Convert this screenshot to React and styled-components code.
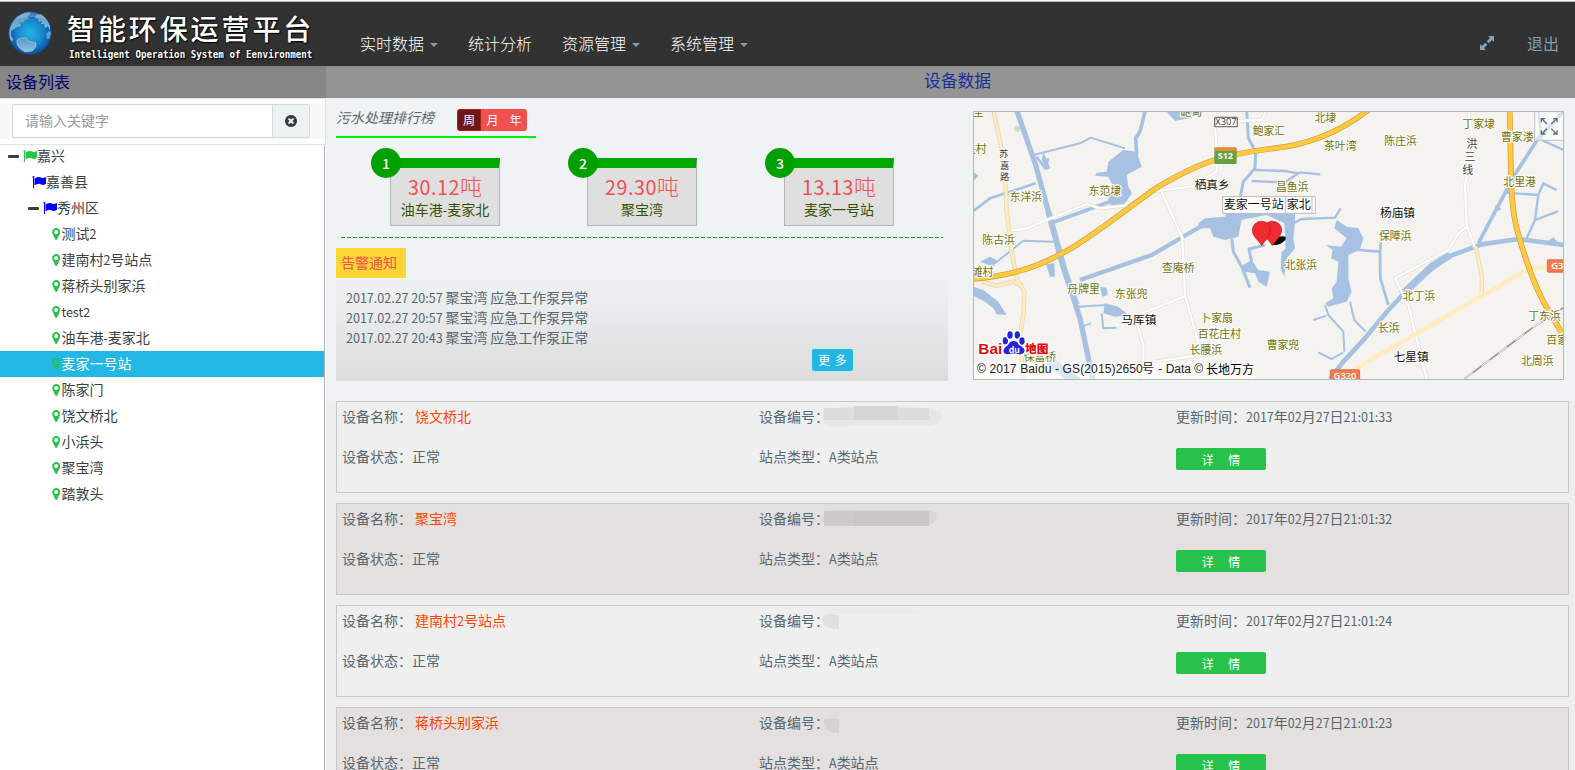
import React from 'react';
import styled, { createGlobalStyle } from 'styled-components';

const Global = createGlobalStyle`
  * { box-sizing: border-box; }
  body {
    margin: 0;
    background: #eff3f4;
    color: #58666e;
    font-family: "Noto Sans CJK SC", sans-serif;
    font-size: 14px;
    font-weight: 400;
    line-height: 20px;
  }
`;

const Latin = styled.span`
  font-size: 0.895em;
  font-weight: 400;
`;

/* Latin runs are set a little smaller than the Chinese text around them. */
const mix = (text) =>
  text.split(/([A-Za-z0-9.:\- ]+)/).map((part, i) =>
    i % 2 ? <Latin key={i}>{part}</Latin> : part
  );

const Page = styled.div`
  width: 100%;
  height: 770px;
  overflow: hidden;
  display: flex;
  flex-direction: column;
`;

const Header = styled.header`
  flex: none;
  height: 66px;
  border-top: 1px solid #f1f4f4;
  background: #323232;
  box-shadow: inset 0 1px 0 #b9bfbf;
  display: flex;
`;

const Brand = styled.div`
  width: 360px;
  padding: 10px 0 0 8px;
  display: flex;
  gap: 15px;
`;

const BrandText = styled.div`
  color: #fff;
  white-space: nowrap;
  text-shadow: 0 0 2px #000, 1px 1px 1px #000;
`;

const BrandName = styled.div`
  height: 36px;
  font-size: 28px;
  font-weight: 500;
  line-height: 35px;
  letter-spacing: 2.9px;
`;

const BrandSub = styled.div`
  padding-left: 2px;
  font: bold 9.2px/13px "DejaVu Sans Mono", monospace;
  transform: scaleY(1.15);
`;

const Nav = styled.nav`
  flex: 1;
  padding: 31px 0 0 0;
  display: flex;
  gap: 29px;
  color: #fff;
  font-size: 16px;
  font-weight: 300;
  line-height: 22px;
`;

const NavItem = styled.a`
  display: flex;
  align-items: center;
  gap: 6px;
  height: 22px;
  &:nth-child(n + 2) { padding-left: 1px; }
`;

const Caret = styled.i`
  margin-top: 4px;
  border: 4px solid transparent;
  border-top-color: #7f9bb0;
  border-bottom: 0;
`;

const HeaderActions = styled.div`
  display: flex;
  align-items: center;
  gap: 32px;
  height: 22px;
  margin-top: 31px;
  padding-right: 16px;
  color: #7f9db3;
  font-size: 16px;
`;

const Body = styled.div`
  flex: 1;
  min-height: 0;
  display: flex;
`;

const Sidebar = styled.aside`
  flex: none;
  width: 326px;
  display: flex;
  flex-direction: column;
  background: #fff;
`;

const SideTitle = styled.div`
  flex: none;
  height: 32px;
  padding-left: 6px;
  background: linear-gradient(#7f7f7f, #868686 3px);
  color: #00006e;
  font-size: 16px;
  line-height: 31px;
`;

const SearchBar = styled.div`
  flex: none;
  height: 47px;
  padding: 5px 0 0;
  border: 1px solid #dee5e7;
  border-left: 0;
`;

const SearchInner = styled.div`
  height: 35px;
  padding: 0 15px 0 12px;
  display: flex;
  background: #f6f8f8;
`;

const SearchField = styled.div`
  flex: 1;
  height: 34px;
  padding: 0 12px;
  border: 1px solid #cfdadd;
  border-radius: 2px 0 0 2px;
  background: #fff;
  color: #999;
  line-height: 31px;
`;

const ClearButton = styled.button`
  width: 38px;
  height: 34px;
  margin-left: -1px;
  padding: 0;
  border: 1px solid #cfdadd;
  border-radius: 0 2px 2px 0;
  background: #edf1f2;
  display: grid;
  place-items: center;
`;

const Tree = styled.ul`
  flex: 1;
  margin: 0 1px 0 0;
  padding: 0;
  list-style: none;
  border-right: 1px solid #adb1b2;
  color: #363f44;
`;

const TreeRow = styled.li`
  height: 26px;
  padding-left: ${(p) => p.$indent}px;
  display: flex;
  align-items: center;
  background: ${(p) => (p.$active ? '#23b7e5' : 'transparent')};
  color: ${(p) => (p.$active ? '#fff' : 'inherit')};
  &:first-child { height: 24px; }
  &:first-child > * { margin-top: -2px; }
`;

const Minus = styled.i`
  width: 11px;
  height: 3px;
  margin-right: 4px;
  border-radius: 1px;
  background: #363f44;
`;

const TreeText = styled.span`
  padding: 0 0 2px ${(p) => (p.$leaf ? 1 : 0)}px;
  white-space: nowrap;
`;

const Main = styled.main`
  flex: 1;
  min-width: 0;
  display: flex;
  flex-direction: column;
`;

const MainTitle = styled.div`
  flex: none;
  height: 32px;
  padding-left: 14px;
  background: linear-gradient(#898989, #949494 3px);
  color: #182f95;
  font-size: 16.8px;
  line-height: 29px;
  text-align: center;
`;

const Overview = styled.section`
  flex: none;
  height: 303px;
  padding-left: 10px;
  display: flex;
  gap: 25px;
`;

const Left = styled.div`
  width: 612px;
`;

const RankHead = styled.div`
  width: 200px;
  height: 40px;
  padding: 11px 9px 0 0;
  border-bottom: 2px solid #00ee00;
  display: flex;
  justify-content: space-between;
`;

const RankTitle = styled.em`
  margin-top: -2px;
  white-space: nowrap;
`;

const Switch = styled.div`
  height: 22px;
  display: flex;
  border-radius: 3px;
  overflow: hidden;
  background: #f05050;
`;

const SwitchItem = styled.span`
  width: ${(p) => (p.$on ? 24 : 23)}px;
  border: ${(p) => (p.$on ? '1px solid #a32020' : '0')};
  border-radius: ${(p) => (p.$on ? '3px 0 0 3px' : '0')};
  background: ${(p) => (p.$on ? '#6d1717' : 'transparent')};
  color: #fff;
  font-size: 12px;
  line-height: ${(p) => (p.$on ? 19 : 21)}px;
  text-align: center;
`;

const RankCards = styled.div`
  height: 99px;
  margin-right: 5px;
  padding: 20px 0 0 54px;
  display: flex;
  gap: 87px;
`;

const Divider = styled.div`
  height: 1px;
  margin: 0 5px 0 5px;
  background: repeating-linear-gradient(90deg, #00a61c 0 3.6px, transparent 3.6px 6px);
`;

const RankCard = styled.div`
  position: relative;
  width: 110px;
  height: 68px;
  padding-top: 4px;
  border: 1px solid #b5b5b5;
  border-top: 10px solid #00a800;
  background: #dfdfdf;
  text-align: center;
`;

const RankNo = styled.b`
  position: absolute;
  left: -20px;
  top: -20px;
  width: 30px;
  height: 30px;
  border-radius: 50%;
  background: #00a000;
  color: #fff;
  font-size: 14px;
  font-weight: 500;
  line-height: 31px;
`;

const RankValue = styled.div`
  color: #f05050;
  font-size: 22px;
  font-weight: 300;
  line-height: 27px;
  ${Latin} { letter-spacing: 0.6px; }
`;

const RankName = styled.div`
  color: #375000;
  line-height: 18px;
`;

const AlertTitle = styled.div`
  width: 70px;
  height: 30px;
  margin-top: 10px;
  padding-left: 5px;
  background: #fcd635;
  color: #f05050;
  line-height: 28px;
`;

const AlertBox = styled.div`
  height: 103px;
  padding: 9px 95px 0 10px;
  background: linear-gradient(#eff2f4, #dcdcdc);
`;

const AlertLine = styled.div`
  height: 20px;
  white-space: pre;
`;

const MoreButton = styled.button`
  display: block;
  width: 41px;
  height: 22px;
  margin: 2px 0 0 auto;
  padding: 0;
  border: 0;
  border-radius: 2px;
  background: #23b7e5;
  color: #fff;
  font: 400 12px/20px "Noto Sans CJK SC", sans-serif;
  word-spacing: 2px;
`;

const MapBox = styled.div`
  width: 591px;
  height: 269px;
  margin-top: 13px;
  border: 1px solid #b3b8ba;
  svg { display: block; }
`;

const Devices = styled.section`
  flex: 1;
  padding: 0 6px 0 10px;
  background: #eee;
`;

const Device = styled.article`
  height: 92px;
  margin-bottom: 10px;
  padding: 4px 5px;
  border: 1px solid #c8c8c8;
  background: ${(p) => (p.$odd ? '#e4e0df' : '#efefef')};
  display: grid;
  grid-template-columns: 417px 417px 1fr;
  grid-template-rows: 40px 24px;
`;

const Cell = styled.div`
  position: relative;
  height: 20px;
  white-space: nowrap;
`;

const Name = styled.a`
  margin-left: 3px;
  color: #ff4400;
`;

const Redacted = styled.svg`
  position: absolute;
  left: 62px;
  top: -1px;
`;

const DetailButton = styled.button`
  width: 90px;
  height: 22px;
  margin-top: 2px;
  padding: 0;
  border: 0;
  border-radius: 2px;
  background: #27c24c;
  color: #fff;
  font: 400 12px/21px "Noto Sans CJK SC", sans-serif;
  word-spacing: 4.5px;
`;

const FLAG =
  'M320 256q0 72-64 110v1266q0 13-9.5 22.5t-22.5 9.5h-64q-13 0-22.5-9.5t-9.5-22.5v-1266q-64-38-64-110 0-53 37.5-90.5t90.5-37.5 90.5 37.5 37.5 90.5zm1472 64v763q0 25-12.5 38.5t-39.5 27.5q-215 116-369 116-61 0-123.5-22t-108.5-48-115.5-48-142.5-22q-192 0-464 146-17 9-33 9-26 0-45-19t-19-45v-742q0-32 31-55 21-14 79-43 236-120 421-120 107 0 200 29t219 88q38 19 88 19 54 0 117.5-21t110-47 88-47 54.5-21q26 0 45 19t19 45z';
const PIN =
  'M768 640q0-106-75-181t-181-75-181 75-75 181 75 181 181 75 181-75 75-181zm256 0q0 109-33 179l-364 774q-16 33-47.5 52t-67.5 19-67.5-19-46.5-52l-365-774q-33-70-33-179 0-212 150-362t362-150 362 150 150 362z';
const CLEAR =
  'M1277 1122q0-26-19-45l-181-181 181-181q19-19 19-45 0-27-19-46l-90-90q-19-19-46-19-26 0-45 19l-181 181-181-181q-19-19-45-19-27 0-46 19l-90 90q-19 19-19 46 0 26 19 45l181 181-181 181q-19 19-19 45 0 27 19 46l90 90q19 19 46 19 26 0 45-19l181-181 181 181q19 19 45 19 27 0 46-19l90-90q19-19 19-46zm387-226q0 209-103 385.5t-279.5 279.5-385.5 103-385.5-103-279.5-279.5-103-385.5 103-385.5 279.5-279.5 385.5-103 385.5 103 279.5 279.5 103 385.5z';

const FlagIcon = ({ color }) => (
  <svg width="14" height="14" viewBox="0 0 1792 1792" fill={color}><path d={FLAG} /></svg>
);
const PinIcon = () => (
  <svg width="8.4" height="14" viewBox="0 0 1024 1792" fill="#27c24c"><path d={PIN} /></svg>
);
const ExpandIcon = () => (
  <svg width="16" height="16" viewBox="0 0 16 16" fill="#86a3ba">
    <path d="M9 1h6v6l-2-2-3.3 3.3-2-2L11 3zM7 15H1V9l2 2 3.3-3.3 2 2L5 13z" />
  </svg>
);

const Globe = () => (
  <svg width="44" height="46" viewBox="0 0 44 46">
    <defs>
      <radialGradient id="sea" cx="50%" cy="50%" r="50%">
        <stop offset="0" stopColor="#25b4ea" />
        <stop offset="0.6" stopColor="#1787cd" />
        <stop offset="1" stopColor="#0f4f9c" />
      </radialGradient>
      <linearGradient id="land" x1="0" y1="0" x2="0" y2="1">
        <stop offset="0" stopColor="#5c94bd" />
        <stop offset="1" stopColor="#8fc4e6" />
      </linearGradient>
    </defs>
    <circle cx="22" cy="22" r="21.5" fill="url(#sea)" />
    <path d="M2 17Q5 8 12 4Q17 1 22 1L22 4L19 5L21 8L17 9L15 12L12 11L13 15L9 16L6 18L3 20L3 25L5 28L4 31Q0 25 2 17Z" fill="url(#land)" />
    <path d="M9 29Q13 26 18 27L20 30L28 32Q29 36 24 40L17 41Q10 37 9 33Z" fill="url(#land)" stroke="#a9d5ef" strokeWidth=".6" />
    <path d="M28 4L33 3Q39 7 42 15L42 20L40 15L37 17L36 13L33 13L34 10L31 11L30 8L27 7Z" fill="url(#land)" />
    <path d="M41 20L38 23L39 28L41 28Q43 25 43 21Z" fill="#5b9dcd" />
    <path d="M6 9Q14 1 22 1Q33 1 38 9Q25 3 6 9Z" fill="#fff" opacity=".2" />
  </svg>
);

const villages = [
  ['圣', 24, 20], ['关村', 0, 131], ['东洋浜', 134, 277], ['东范埭', 371, 257], ['陈古浜', 52, 406],
  ['滩村', 20, 500], ['查庵桥', 591, 488], ['丹牌里', 307, 552], ['东张兜', 450, 568],
  ['卜家扇', 706, 638], ['百花庄村', 698, 686], ['长腰浜', 674, 736], ['保富桥', 176, 756],
  ['鲍甸', 646, 20], ['鲍家汇', 863, 77], ['北埭', 1049, 40], ['茶叶湾', 1077, 122], ['陈庄浜', 1258, 109],
  ['丁家埭', 1492, 58], ['曹家溇', 1608, 97], ['昌鱼浜', 933, 245], ['北里港', 1615, 231],
  ['保障浜', 1242, 393], ['北张浜', 959, 479], ['北丁浜', 1313, 573], ['长浜', 1239, 668],
  ['曹家兜', 905, 721], ['丁东浜', 1690, 632], ['百家', 1744, 704], ['北周浜', 1668, 767],
];
const towns = [['栖真乡', 689, 240], ['马厍镇', 469, 644], ['杨庙镇', 1245, 323], ['七星镇', 1286, 755]];
const roadNames = [
  ['苏', 116, 146, 28], ['嘉', 119, 180, 28], ['路', 119, 213, 28],
  ['洪', 1521, 117, 33], ['三', 1515, 156, 33], ['线', 1508, 195, 33],
];

const RegionMap = () => (
  <svg width="589" height="267" viewBox="27 21 1767 801" fontFamily='"Noto Sans CJK SC", sans-serif'>
    <rect x="0" y="0" width="1830" height="860" fill="#f4f3f0" />
    <circle cx="157" cy="72" r="9" fill="#c5dfc0" />
    <g fill="none" stroke="#a6c1e2" strokeLinejoin="round">
      <path d="M155 15L212 180L250 320L290 470L345 640L385 830" strokeWidth="16" />
      <path d="M250 320L300 500L335 600" strokeWidth="18" />
      <path d="M20 322L75 280L212 235" strokeWidth="8" />
      <path d="M205 150L345 115L378 98L480 130" strokeWidth="6" />
      <path d="M215 155L240 190L250 160" strokeWidth="8" />
      <path d="M540 20L525 80L512 100L515 150" strokeWidth="11" />
      <path d="M265 352L430 292" strokeWidth="11" />
      <path d="M345 525L560 450L715 360" strokeWidth="13" />
      <path d="M265 410L175 407L90 475" strokeWidth="6" />
      <path d="M845 15L850 100L872 140L870 190L835 230L825 280" strokeWidth="9" />
      <path d="M870 195L960 198L1000 205M860 228L960 232L1005 202L1066 208" strokeWidth="7" />
      <path d="M800 400L805 440L830 485L855 548" strokeWidth="9" />
      <path d="M900 420L852 432L860 470" strokeWidth="9" />
      <path d="M975 360L1010 342L1110 338L1127 310" strokeWidth="7" />
      <path d="M1180 435L1245 440L1248 410M1245 440L1246 520L1270 600" strokeWidth="8" />
      <path d="M1080 600L1090 630L1135 680L1138 740" strokeWidth="6" />
      <path d="M1045 645L1085 632M1155 590L1168 645L1202 680M1060 742L1100 762L1135 742" strokeWidth="6" />
      <path d="M1095 822L1135 770L1200 700L1270 615L1360 520L1450 455L1550 418L1660 402L1795 420" strokeWidth="14" />
      <path d="M1310 570L1400 485L1455 450" strokeWidth="22" />
      <path d="M1540 415L1590 320L1655 200L1720 100L1795 20" strokeWidth="11" />
      <path d="M1720 15L1730 105L1795 135M1620 263L1720 270L1735 235L1775 255M1685 400L1710 345L1776 320L1710 345L1720 270" strokeWidth="7" />
      <path d="M340 605L425 600M350 665L378 655M410 625L415 670L455 668" strokeWidth="6" />
    </g>
    <g fill="#a6c1e2">
      <path d="M475 135L515 140L530 185L485 210L490 245L500 265L470 310L425 295L445 245L430 215L390 212L395 203L425 200L430 170Z" />
      <path d="M235 140L256 190L245 195L230 165Z" />
      <path d="M45 470L75 455L95 465L85 485Z" /><path d="M243 478L268 475L270 515L255 515Z" />
      <path d="M25 545L55 555L100 590L125 630L95 628L85 610L60 590L25 572Z" />
      <path d="M420 595L460 605L490 630L450 635L415 625Z" />
      <path d="M405 545L425 548L428 570L412 575Z" />
      <path d="M600 15L700 15L680 38L630 48Z" /><path d="M25 200L40 212L25 230Z" />
      <path d="M700 355L720 340L780 335L795 308L990 295L990 350L985 400L990 430L965 460L958 515L947 490L950 440L962 430L958 355L905 330L830 345L820 395L780 405L745 395L735 370L700 370Z" />
      <path d="M825 485L860 465L880 495L915 500L905 545L880 530L870 505L835 500Z" />
      <path d="M1115 345L1145 365L1180 370L1195 400L1185 435L1150 450L1150 520L1160 560L1145 590L1090 605L1080 595L1105 580L1100 550L1115 530L1120 470L1098 460L1103 435L1082 420L1128 425L1145 400L1108 370Z" />
      <path d="M1745 410L1765 397L1782 415Z" /><path d="M1590 300L1610 312L1590 322Z" />
      <path d="M240 775L280 770L350 822L300 822Z" />
    </g>
    <path d="M838 342L900 337L895 350L862 372L866 395L836 390Z" fill="#f4f3f0" />
    <g fill="none" strokeLinejoin="round">
      <g stroke="#e2dfd2" strokeWidth="11">
        <path d="M140 376L180 372L250 343L365 297L405 310L480 302" />
        <path d="M560 260L690 243M588 255L652 400L660 570L705 730M530 625L664 572M515 650L535 720L535 822M570 770L740 745" />
        <path d="M820 48L890 45L905 15M750 70L755 130M755 180L755 200L690 235" />
        <path d="M1510 15L1525 120L1500 240L1505 360L1530 430M1505 366L1480 385L1450 435L1290 520L1330 600L1385 822" />
      </g>
      <g stroke="#fff" strokeWidth="7">
        <path d="M140 376L180 372L250 343L365 297L405 310L480 302" />
        <path d="M560 260L690 243M588 255L652 400L660 570L705 730M530 625L664 572M515 650L535 720L535 822M570 770L740 745" />
        <path d="M820 48L890 45L905 15M750 70L755 130M755 180L755 200L690 235" />
        <path d="M1510 15L1525 120L1500 240L1505 360L1530 430M1505 366L1480 385L1450 435L1290 520L1330 600L1385 822" />
      </g>
      <path d="M85 15L120 180L125 320L140 440L155 520L178 560L175 630L165 690L175 830M50 530L95 542L145 530L175 545" stroke="#ddd5b8" strokeWidth="13" />
      <path d="M85 15L120 180L125 320L140 440L155 520L178 560L175 630L165 690L175 830M50 530L95 542L145 530L175 545" stroke="#ffebbd" strokeWidth="9" />
      <path d="M1532 425L1550 510L1550 562" stroke="#ddd5b8" strokeWidth="12" />
      <path d="M1532 425L1550 510L1550 562" stroke="#ffebbd" strokeWidth="8" />
      <path d="M1150 805L1260 740L1450 630L1600 545L1690 490L1750 485" stroke="#ffebc2" strokeWidth="14" />
      <g strokeWidth="17" stroke="#c99a3b">
        <path d="M20 522Q180 510 290 445C350 420 500 300 580 245C690 180 760 150 925 130Q1080 115 1210 15" />
        <path d="M1634 15L1638 210Q1640 310 1655 370Q1690 500 1735 590L1800 700" />
      </g>
      <g strokeWidth="13" stroke="#ffc942">
        <path d="M20 522Q180 510 290 445C350 420 500 300 580 245C690 180 760 150 925 130Q1080 115 1210 15" />
        <path d="M1634 15L1638 210Q1640 310 1655 370Q1690 500 1735 590L1800 700" />
      </g>
      <path d="M1498 822L1700 670L1800 605" stroke="#999" strokeWidth="5" />
      <path d="M1498 822L1700 670L1800 605" stroke="#fff" strokeWidth="3" strokeDasharray="32 32" />
    </g>

    <g fontSize="32.5" fontWeight="400" fill="#6f7312" stroke="#fbfaf6" strokeWidth="7" strokeLinejoin="round" style={{ paintOrder: 'stroke' }}>
      {villages.map(([t, x, y]) => <text key={t} x={x} y={y + 12}>{t}</text>)}
      <g fontSize="35" fill="#111">
        {towns.map(([t, x, y]) => <text key={t} x={x} y={y + 13}>{t}</text>)}
      </g>
      <g fill="#444" textAnchor="middle">
        {roadNames.map(([t, x, y, s]) => <text key={t} x={x} y={y + 11} fontSize={s}>{t}</text>)}
      </g>
    </g>

    <g textAnchor="middle" fontFamily='"Open Sans", sans-serif'>
      <rect x="749" y="37" width="68" height="28" rx="3" fill="#fff" stroke="#777" strokeWidth="4" />
      <text x="783" y="61" fontSize="28" fill="#333">X307</text>
      <rect x="748" y="128" width="67" height="49" rx="4" fill="#64a040" />
      <path d="M748 138V132Q748 127 753 127H810Q815 127 815 132V138Z" fill="#e08d3c" />
      <text x="781" y="162" fontSize="27" fontWeight="700" fill="#fff">S12</text>
      <rect x="1747" y="464" width="70" height="38" rx="3" fill="#ef7b50" stroke="#d1592e" strokeWidth="2" />
      <text x="1785" y="493" fontSize="28" fontWeight="600" fill="#fff">G32</text>
      <rect x="1096" y="794" width="88" height="38" rx="3" fill="#ef7b50" stroke="#d1592e" strokeWidth="2" />
      <text x="1140" y="821" fontSize="28" fontWeight="600" fill="#fff">G320</text>
    </g>

    <g fill="#fff" stroke="#bdbdbd" strokeWidth="3">
      <rect x="773" y="275" width="278" height="50" />
      <rect x="773" y="275" width="268" height="50" />
      <path d="M962 275V325" />
    </g>
    <g fontSize="36" fill="#111" fontWeight="400">
      <text x="776" y="313">麦家一号站</text><text x="965" y="313">家北</text>
    </g>
    <ellipse cx="942" cy="407" rx="22" ry="10" transform="rotate(-25 942 407)" />
    <g fill="#ef2b2f" stroke="#a81a1e" strokeWidth="2">
      <path d="M922 422C914 406 896 396 895 376A27 27 0 0 1 950 376C948 396 932 406 922 422Z" />
      <path d="M890 422C882 406 863 396 862 376A27 27 0 0 1 917 376C915 396 900 406 890 422Z" />
    </g>

    <rect x="1709" y="20" width="90" height="86" fill="#fff" fillOpacity=".55" stroke="#c3c3c3" strokeWidth="3" />
    <g fill="none" stroke="#5d6f80" strokeWidth="4">
      <path d="M1746 57L1731 42M1729 52V41H1741M1759 57L1774 42M1764 41H1776V52M1746 71L1731 86M1729 76V87H1741M1759 71L1774 86M1764 87H1776V76" />
    </g>

    <rect x="27" y="771" width="843" height="51" fill="#fff" fillOpacity=".6" />
    <g fontSize="36" fill="#222" fontWeight="400" fontFamily='"Liberation Sans", "Noto Sans CJK SC", sans-serif'>
      <text x="36" y="804" letterSpacing=".4">© 2017 Baidu - GS(2015)2650</text>
      <text x="531" y="805">号</text>
      <text x="580" y="804">- Data ©</text>
      <text x="723" y="806" fill="#000">长地万方</text>
    </g>

    <g stroke="#fff" strokeWidth="10" strokeLinejoin="round" style={{ paintOrder: 'stroke' }}>
      <text x="40" y="747" fontSize="46" fontWeight="700" fill="#e10b10" fontFamily='"Liberation Sans", sans-serif'>Bai</text>
      <text x="180" y="743" fontSize="35" fontWeight="900" fill="#e10b10">地图</text>
      <g fill="#2723dc">
        <path d="M146 708C160 708 164 722 174 728C186 740 172 752 158 747C150 745 142 745 134 747C118 752 108 738 122 726C130 720 132 708 146 708Z" />
        <ellipse cx="121" cy="707" rx="8" ry="11" /><ellipse cx="135" cy="690" rx="8" ry="11" />
        <ellipse cx="157" cy="690" rx="8" ry="11" /><ellipse cx="171" cy="708" rx="8" ry="11" />
      </g>
      <text x="131" y="744" fontSize="27" fontWeight="700" fill="#fff" stroke="none" fontFamily='"Liberation Sans", sans-serif'>du</text>
    </g>
  </svg>
);

const tree = [
  { indent: 8, minus: true, flag: '#27c24c', text: '嘉兴' },
  { indent: 32, flag: '#0000ff', text: '嘉善县' },
  { indent: 28, minus: true, flag: '#0000ff', text: '秀州区' },
  ...['测试2', '建南村2号站点', '蒋桥头别家浜', 'test2', '油车港-麦家北', '麦家一号站', '陈家门', '饶文桥北', '小浜头', '聚宝湾', '踏敦头']
    .map((text) => ({ indent: 52, text })),
];
const ranks = [['30.12吨', '油车港-麦家北'], ['29.30吨', '聚宝湾'], ['13.13吨', '麦家一号站']];
const alerts = [
  ['2017.02.27 20:57', '聚宝湾', '应急工作泵异常'],
  ['2017.02.27 20:57', '聚宝湾', '应急工作泵异常'],
  ['2017.02.27 20:43', '聚宝湾', '应急工作泵正常'],
];
const masks = [
  <g key="a">
    <path d="M12 3L34 1H78L106 3Q121 4 121 11Q120 20 108 21H30L10 22Q1 20 1 12Q2 4 12 3Z" fill="#e6e8e8" />
    <rect x="3" y="3" width="105" height="12" fill="#dcddde" />
    <path d="M33 1H76V15H33Z" fill="#d4d5d8" />
  </g>,
  <g key="b">
    <path d="M6 3H106Q116 4 116 10T106 19H8Q1 17 1 11Q2 5 6 3Z" fill="#dad7d8" />
    <rect x="3" y="4" width="105" height="15" fill="#c8c6c9" />
    <rect x="3" y="4" width="30" height="15" fill="#cdcacb" />
  </g>,
  <g key="c">
    <path d="M18 6V20H13Q2 19 1 11Q2 5 8 5Z" fill="#e0e0e0" />
    <path d="M8 0H70Q90 -4 102 5H8Z" fill="#ebebeb" />
  </g>,
  <g key="d"><path d="M18 8V22H13Q3 19 3 12V8Z" fill="#d6d4d2" /><path d="M18 2V8H4Q8 3 18 2Z" fill="#e0dddd" /></g>,
];
const devices = [['饶文桥北', '33'], ['聚宝湾', '32'], ['建南村2号站点', '24'], ['蒋桥头别家浜', '23']];

export default function App() {
  return (
    <Page>
      <Global />
      <Header>
        <Brand>
          <Globe />
          <BrandText>
            <BrandName>智能环保运营平台</BrandName>
            <BrandSub>Intelligent Operation System of Eenvironment</BrandSub>
          </BrandText>
        </Brand>
        <Nav>
          <NavItem>实时数据<Caret /></NavItem>
          <NavItem>统计分析</NavItem>
          <NavItem>资源管理<Caret /></NavItem>
          <NavItem>系统管理<Caret /></NavItem>
        </Nav>
        <HeaderActions><ExpandIcon /><span>退出</span></HeaderActions>
      </Header>
      <Body>
        <Sidebar>
          <SideTitle>设备列表</SideTitle>
          <SearchBar>
            <SearchInner>
              <SearchField>请输入关键字</SearchField>
              <ClearButton>
                <svg width="14" height="14" viewBox="0 0 1792 1792" fill="#333c41"><path d={CLEAR} /></svg>
              </ClearButton>
            </SearchInner>
          </SearchBar>
          <Tree>
            {tree.map((n) => (
              <TreeRow key={n.text} $indent={n.indent} $active={n.text === '麦家一号站'}>
                {n.minus && <Minus />}
                {n.flag ? <FlagIcon color={n.flag} /> : <PinIcon />}
                <TreeText $leaf={!n.flag}>{mix(n.text)}</TreeText>
              </TreeRow>
            ))}
          </Tree>
        </Sidebar>
        <Main>
          <MainTitle>设备数据</MainTitle>
          <Overview>
            <Left>
              <RankHead>
                <RankTitle>污水处理排行榜</RankTitle>
                <Switch>
                  <SwitchItem $on>周</SwitchItem><SwitchItem>月</SwitchItem><SwitchItem>年</SwitchItem>
                </Switch>
              </RankHead>
              <RankCards>
                {ranks.map(([v, n], i) => (
                  <RankCard key={n}>
                    <RankNo>{i + 1}</RankNo>
                    <RankValue>{mix(v)}</RankValue>
                    <RankName>{mix(n)}</RankName>
                  </RankCard>
                ))}
              </RankCards>
              <Divider />
              <AlertTitle>告警通知</AlertTitle>
              <AlertBox>
                {alerts.map((a, i) => <AlertLine key={i}>{mix(a.join(' '))}</AlertLine>)}
                <MoreButton>更 多</MoreButton>
              </AlertBox>
            </Left>
            <MapBox><RegionMap /></MapBox>
          </Overview>
          <Devices>
            {devices.map(([name, sec], i) => (
              <Device key={name} $odd={i % 2 === 1}>
                <Cell>设备名称：<Name>{mix(name)}</Name></Cell>
                <Cell>设备编号：<Redacted width="126" height="26">{masks[i]}</Redacted></Cell>
                <Cell>更新时间：{mix(`2017年02月27日21:01:${sec}`)}</Cell>
                <Cell>设备状态：正常</Cell>
                <Cell>站点类型：{mix('A类站点')}</Cell>
                <DetailButton>详 &nbsp;情</DetailButton>
              </Device>
            ))}
          </Devices>
        </Main>
      </Body>
    </Page>
  );
}
